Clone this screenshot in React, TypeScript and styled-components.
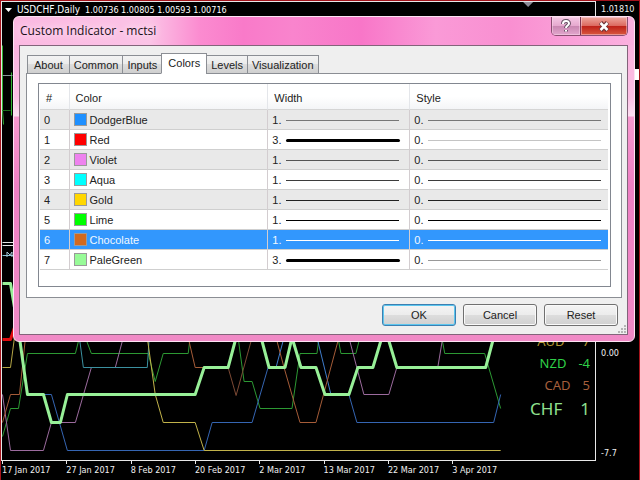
import React, { useState } from "react";
import styled, { createGlobalStyle, css } from "styled-components";

const GlobalStyle = createGlobalStyle`
  *, *::before, *::after { box-sizing: border-box; }
  body { margin: 0; background: #000; }
  button { font: inherit; color: inherit; margin: 0; }
`;

/* ---------- chart terminal ---------- */

const Terminal = styled.main`
  position: relative;
  display: grid;
  grid-template-columns: minmax(0, 1fr) 43px;
  grid-template-rows: minmax(0, 1fr) 19px;
  min-height: 100vh;
  border: 1px solid #a5141c;
  background: #000;
  color: #f0f0f0;
  font: 9px/16px "DejaVu Sans Condensed", "DejaVu Sans", sans-serif;
`;

const Plot = styled.section`
  position: relative;
  display: flex;
  flex-direction: column;
  min-height: 460px;
  border: 1px solid #e8e8e8;
`;

const ChartLines = styled.svg`
  position: absolute;
  inset: 0;
  width: 100%;
  height: 100%;
  fill: none;
`;

const SymbolBar = styled.header`
  position: relative;
  display: flex;
  align-items: center;
  gap: 5px;
  padding-left: 3px;
  color: #fff;
`;

const SymbolName = styled.span`
  font-size: 10px;
`;

const Ratings = styled.dl`
  position: relative;
  align-self: flex-end;
  margin: auto 5px 38px 0;
  font-family: "Noto Sans", sans-serif;
`;

const Rating = styled.div<{ $color: string; $large?: boolean; $gap: number }>`
  display: flex;
  justify-content: flex-end;
  gap: ${(p) => p.$gap}px;
  color: ${(p) => p.$color};
  font-size: ${(p) => (p.$large ? "17px" : "13px")};
  line-height: ${(p) => (p.$large ? "26px" : "22px")};
  dd { margin: 0; }
`;

const PriceAxis = styled.aside`
  position: relative;
  display: grid;
  grid-template-rows: 1fr auto auto;
  row-gap: 84px;
  padding: 0 0 0 5px;
`;

const PriceMarker = styled.span`
  position: absolute;
  top: 68px;
  right: 0;
  width: 4px;
  height: 11px;
  background: #fff;
`;

const TimeAxis = styled.footer`
  display: grid;
  grid-template-columns: repeat(7, 64fr) 143fr;
  padding-left: 1px;
  line-height: 18px;
  white-space: nowrap;
`;

const TimeLabel = styled.time`
  min-width: 0;
  background: linear-gradient(#e8e8e8, #e8e8e8) 0 0 / 1px 3px no-repeat;
`;

/* ---------- dialog ---------- */

const Dialog = styled.section`
  position: absolute;
  top: 15px;
  left: 12px;
  right: 4px;
  padding: 0 6px 6px 5px;
  border: 1px solid #fde3f3;
  border-radius: 6px;
  background:
    linear-gradient(90deg, #fbb9e1 0, #fbc3e6 22%, #fb8bd0 30%, #f97ac9 37%, #f984cd 45%, #f876c8 56%, #fa9ad7 68%, #f98fd1 80%, #fbb1df 100%) 0 0 / 100% 28px no-repeat,
    linear-gradient(#fbb3df 28px, #fbbfe4 80px, #fde0f2 99px, #f799cf 100px, #ee7fc3 170px, #f08ac6 100%);
  color: #222;
  font: 11px/14px "Liberation Sans", Arial, sans-serif;
`;

const TitleBar = styled.header`
  display: flex;
  justify-content: space-between;
  height: 28px;
`;

const Title = styled.h1`
  margin: 0 0 0 1px;
  font: 12px/28px "Open Sans", "Noto Sans", sans-serif;
  color: #1b1018;
  text-shadow: 0 0 6px #ffe6f5, 0 0 8px #ffe6f5;
`;

const CaptionButtons = styled.div`
  display: flex;
  height: 19px;
  border: 1px solid #8a4f72;
  border-top: 0;
  border-radius: 0 0 5px 5px;
  overflow: hidden;
`;

const CaptionButton = styled.button<{ $close?: boolean }>`
  display: grid;
  place-items: center;
  padding: 0;
  border: 0;
  width: ${(p) => (p.$close ? "47px" : "28px")};
  border-left: ${(p) => (p.$close ? "1px solid #7d3550" : "0")};
  background: ${(p) =>
    p.$close
      ? "linear-gradient(#eea79f, #dc6a60 48%, #bd2018 50%, #d9583f)"
      : "linear-gradient(#f5c8e4, #e6a9cf 48%, #c987b1 50%, #e2a6cd)"};
  box-shadow: inset 0 0 0 1px rgba(255, 225, 240, 0.45);
`;

const Client = styled.div`
  display: flex;
  flex-direction: column;
  border: 1px solid #82647a;
  padding: 7px 5px 8px 6px;
  background: #efefef;
`;

const TabList = styled.div`
  display: flex;
  align-items: flex-end;
  padding-left: 1px;
  margin-bottom: -1px;
`;

const Tab = styled.button<{ $active: boolean }>`
  position: relative;
  padding: 0 4px;
  height: 19px;
  border: 1px solid #8b8e94;
  margin-left: -1px;
  background: linear-gradient(#f3f3f3, #ebebeb 48%, #dddddd 50%, #cfcfcf);
  &:first-child { padding: 0 6px; margin-left: 0; }
  ${(p) =>
    p.$active &&
    css`
      height: 21px;
      padding: 0 6px 2px;
      border-bottom-color: #fff;
      background: #fff;
    `}
`;

const Panel = styled.div`
  padding: 9px 10px 10px 11px;
  border: 1px solid #8b8e94;
  background: #fff;
`;

const ListFrame = styled.div`
  height: 204px;
  padding: 0 2px 0 1px;
  border: 1px solid #828790;
`;

const List = styled.table`
  width: 100%;
  table-layout: fixed;
  border-collapse: separate;
  border-spacing: 0;
  text-align: left;
`;

const HeadCell = styled.th`
  height: 26px;
  padding: 2px 6px 0;
  border-right: 1px solid #e4e6ea;
  border-bottom: 1px solid #d5d5d5;
  background: linear-gradient(#fff 50%, #f4f5f7);
  font-weight: normal;
  &:last-child { border-right: 0; }
`;

const Row = styled.tr<{ $selected: boolean }>`
  color: #222;
  &:nth-child(odd) { background: #e9e9e9; }
  ${(p) =>
    p.$selected &&
    css`
      && { background: #3297fd; color: #f1f8ff; }
    `}
`;

const Cell = styled.td`
  height: 20px;
  padding: 0 5px 0 4px;
  border-right: 1px solid #d3cdd0;
  border-bottom: 1px solid #cfcfcf;
  &:last-child { border-right: 0; }
`;

const CellContent = styled.div`
  display: flex;
  align-items: center;
  gap: 3px;
`;

const Swatch = styled.span<{ $color: string }>`
  width: 13px;
  height: 13px;
  border: 1px solid #9a9a9a;
  background: ${(p) => p.$color};
`;

const Amount = styled.span`
  width: 10px;
`;

const Stroke = styled.span<{ $weight: number; $color: string; $inset: number }>`
  flex: 1;
  height: ${(p) => p.$weight}px;
  margin: 1px ${(p) => p.$inset}px 0 1px;
  border-radius: ${(p) => (p.$weight > 1 ? "2px" : "0")};
  background: ${(p) => p.$color};
`;

const Actions = styled.div`
  display: flex;
  justify-content: flex-end;
  gap: 7px;
  padding: 6px 4px 0 0;
`;

const ActionButton = styled.button<{ $primary?: boolean }>`
  width: 74px;
  height: 22px;
  padding: 0;
  border: 1px solid ${(p) => (p.$primary ? "#3c7fb1" : "#707070")};
  border-radius: 3px;
  background: linear-gradient(#f4f4f4, #ececec 48%, #dddddd 50%, #d0d0d0);
  box-shadow: inset 0 0 0 1px ${(p) => (p.$primary ? "#5cc6ee" : "#fafafa")};
`;

const ResizeGrip = styled.svg`
  position: absolute;
  right: 8px;
  bottom: 8px;
  fill: #b4b4b4;
`;

type Line = { color: string; points: string; weight?: number };

const LINES: Line[] = [
  { color: "#2c9a33", points: "0,434 8,406 16,406 25,351 73,351 77,335" },
  { color: "#2c9a33", points: "83,335 89,351 146,351 153,379 161,351 186,351 188,335" },
  { color: "#2c9a33", points: "236,335 242,379 250,379 258,406 290,406 298,351 315,351 317,335" },
  { color: "#2c9a33", points: "336,335 339,351 354,351 358,335" },
  { color: "#2c9a33", points: "440,335 443,351 483,351 499,406" },
  { color: "#3565b3", points: "41,392 49,392 65,448 202,448 210,420 250,420 266,365" },
  { color: "#3f7ccc", points: "274,365 282,335" },
  { color: "#3f7ccc", points: "315,335 329,392" },
  { color: "#3565b3", points: "347,392 355,420 492,420 499,392" },
  { color: "#9d6b9f", points: "0,392 8,448 41,448 49,420 73,420 89,365" },
  { color: "#9d6b9f", points: "113,365 121,335" },
  { color: "#9d6b9f", points: "347,335 362,392 387,392 395,365" },
  { color: "#9d6b9f", points: "436,365 441,335" },
  { color: "#3b91a0", points: "77,335 81,365 145,365 147,335" },
  { color: "#a65c38", points: "0,420 8,392 17,392 23,335" },
  { color: "#a65c38", points: "186,335 193,365 202,365" },
  { color: "#7c4934", points: "226,365 234,393 250,335" },
  { color: "#a65c38", points: "274,335 282,365 298,420 314,420 337,335" },
  { color: "#b6a746", points: "0,365 8,365 12,335" },
  { color: "#c2b34a", points: "145,335 153,392 161,420 193,420 202,448 499,448" },
  {
    color: "#98f098",
    weight: 3,
    points:
      "0,281 8,281 17,335 25,392 41,392 49,420 58,420 65,392 193,392 202,365 226,365 234,335",
  },
  { color: "#98f098", weight: 3, points: "259,335 267,365 283,365 290,335 299,365 314,365 323,392 347,392 356,365 371,365 380,335" },
  { color: "#98f098", weight: 3, points: "386,335 395,365 484,365 492,335" },
  { color: "#e00c10", weight: 3, points: "0,337 8,337 12,325" },
  { color: "#32b432", points: "0,43 0,108 1,122" },
  { color: "#32b432", points: "9,70 9,113" },
  { color: "#8a9a9a", points: "0,73 10,73" },
  { color: "#1e6e1e", points: "0,108 8,108" },
  { color: "#e8e8e8", points: "0,240 12,240" },
  { color: "#e8e8e8", points: "0,243 12,243" },
  { color: "#8cc4d8", points: "0,253 12,253" },
];

const DATES = [
  "17 Jan 2017",
  "27 Jan 2017",
  "8 Feb 2017",
  "20 Feb 2017",
  "2 Mar 2017",
  "13 Mar 2017",
  "22 Mar 2017",
  "3 Apr 2017",
];

const RATINGS = [
  { name: "AUD", value: "7", color: "#b49632", gap: 18 },
  { name: "NZD", value: "-4", color: "#2fd048", gap: 12 },
  { name: "CAD", value: "5", color: "#a65f3c", gap: 12 },
  { name: "CHF", value: "1", color: "#8fe08f", gap: 18, large: true },
];

const TABS = ["About", "Common", "Inputs", "Colors", "Levels", "Visualization"];

const ENTRIES = [
  { name: "DodgerBlue", fill: "#1e90ff", width: 1, ink: "#777", styleInk: "#777" },
  { name: "Red", fill: "#ff0000", width: 3, ink: "#000", styleInk: "#c4c4c4" },
  { name: "Violet", fill: "#ee82ee", width: 1, ink: "#555", styleInk: "#555" },
  { name: "Aqua", fill: "#00ffff", width: 1, ink: "#3c3c3c", styleInk: "#3c3c3c" },
  { name: "Gold", fill: "#ffd700", width: 1, ink: "#222", styleInk: "#222" },
  { name: "Lime", fill: "#00ff00", width: 1, ink: "#000", styleInk: "#000" },
  { name: "Chocolate", fill: "#d2691e", width: 1, ink: "#000", styleInk: "#000" },
  { name: "PaleGreen", fill: "#98fb98", width: 3, ink: "#000", styleInk: "#999" },
];

export default function App() {
  const [tab, setTab] = useState("Colors");
  const [selected, setSelected] = useState(6);

  return (
    <>
      <GlobalStyle />
      <Terminal>
        <Plot aria-label="USDCHF daily chart">
          <ChartLines viewBox="0 0 594 458" preserveAspectRatio="none" aria-hidden="true">
            {LINES.map((line, i) => (
              <polyline
                key={i}
                points={line.points}
                stroke={line.color}
                strokeWidth={line.weight ?? 1}
                strokeLinejoin="round"
                transform="translate(0.5 0.5)"
              />
            ))}
            <path d="M522 0h10l-5 5z" fill="#8c8c98" />
            <path d="M5 255v-5l3 3 2-3v5" stroke="#a8c8d8" />
          </ChartLines>
          <SymbolBar>
            <svg width="7" height="4" aria-hidden="true">
              <path d="M0 0h7L3.5 4z" fill="#fff" />
            </svg>
            <SymbolName>USDCHF,Daily</SymbolName>
            <span>1.00736 1.00805 1.00593 1.00716</span>
          </SymbolBar>
          <Ratings>
            {RATINGS.map((r) => (
              <Rating key={r.name} $color={r.color} $large={r.large} $gap={r.gap}>
                <dt>{r.name}</dt>
                <dd>{r.value}</dd>
              </Rating>
            ))}
          </Ratings>
        </Plot>
        <PriceAxis>
          <span>1.01810</span>
          <span>0.00</span>
          <span>-7.7</span>
          <PriceMarker />
        </PriceAxis>
        <TimeAxis>
          {DATES.map((d) => (
            <TimeLabel key={d}>{d}</TimeLabel>
          ))}
        </TimeAxis>

        <Dialog role="dialog" aria-labelledby="dialog-title">
          <TitleBar>
            <Title id="dialog-title">Custom Indicator - mctsi</Title>
            <CaptionButtons>
              <CaptionButton type="button" aria-label="Help">
                <svg width="12" height="14" viewBox="0 0 12 14" fill="none" aria-hidden="true">
                  <path d="M3 5c0-4 6-4 6-.5 0 2-3 2-3 4.500M6 11v1.500" stroke="#6a5266" strokeWidth="4" />
                  <path d="M3 5c0-4 6-4 6-.5 0 2-3 2-3 4.500M6 11v1.500" stroke="#fff" strokeWidth="2" />
                </svg>
              </CaptionButton>
              <CaptionButton type="button" aria-label="Close" $close>
                <svg width="12" height="11" viewBox="0 0 12 11" fill="none" aria-hidden="true">
                  <path d="M2.500 1.500l7 8M9.500 1.500l-7 8" stroke="#6d3438" strokeWidth="4.500" />
                  <path d="M2.500 2l7 7M9.500 2l-7 7" stroke="#fff" strokeWidth="2.500" />
                </svg>
              </CaptionButton>
            </CaptionButtons>
          </TitleBar>
          <Client>
            <TabList role="tablist">
              {TABS.map((t) => (
                <Tab
                  key={t}
                  type="button"
                  role="tab"
                  aria-selected={t === tab}
                  $active={t === tab}
                  onClick={() => setTab(t)}
                >
                  {t}
                </Tab>
              ))}
            </TabList>
            <Panel role="tabpanel" aria-label={tab}>
              <ListFrame>
                <List>
                  <colgroup>
                    <col style={{ width: "5.2%" }} />
                    <col style={{ width: "35%" }} />
                    <col style={{ width: "25%" }} />
                    <col style={{ width: "34.8%" }} />
                  </colgroup>
                  <thead>
                    <tr>
                      <HeadCell>#</HeadCell>
                      <HeadCell>Color</HeadCell>
                      <HeadCell>Width</HeadCell>
                      <HeadCell>Style</HeadCell>
                    </tr>
                  </thead>
                  <tbody>
                    {ENTRIES.map((e, i) => {
                      const active = i === selected;
                      return (
                        <Row key={e.name} $selected={active} onClick={() => setSelected(i)}>
                          <Cell>{i}</Cell>
                          <Cell>
                            <CellContent>
                              <Swatch $color={e.fill} />
                              {e.name}
                            </CellContent>
                          </Cell>
                          <Cell>
                            <CellContent>
                              <Amount>{e.width}.</Amount>
                              <Stroke $weight={e.width} $color={active ? "#fff" : e.ink} $inset={e.width > 1 ? 4 : 5} />
                            </CellContent>
                          </Cell>
                          <Cell>
                            <CellContent>
                              <Amount>0.</Amount>
                              <Stroke $weight={1} $color={active ? "#fff" : e.styleInk} $inset={2} />
                            </CellContent>
                          </Cell>
                        </Row>
                      );
                    })}
                  </tbody>
                </List>
              </ListFrame>
            </Panel>
            <Actions>
              <ActionButton type="button" $primary>OK</ActionButton>
              <ActionButton type="button">Cancel</ActionButton>
              <ActionButton type="button">Reset</ActionButton>
            </Actions>
          </Client>
          <ResizeGrip width="8" height="8" aria-hidden="true">
            <path d="M6 0h2v2h-2zM3 3h2v2h-2zM6 3h2v2h-2zM0 6h2v2h-2zM3 6h2v2h-2zM6 6h2v2h-2z" />
          </ResizeGrip>
        </Dialog>
      </Terminal>
    </>
  );
}
